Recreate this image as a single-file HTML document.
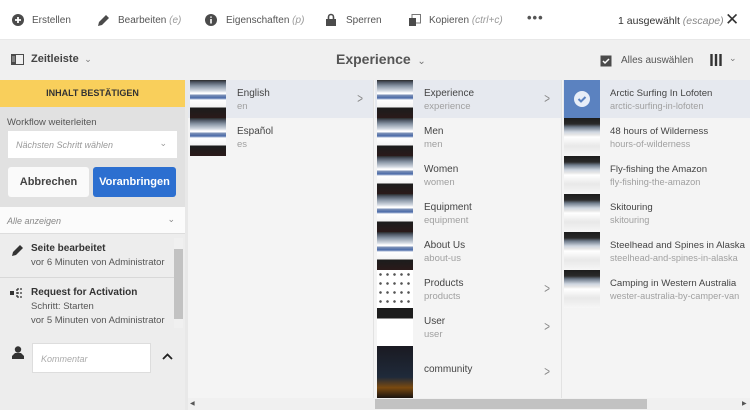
<!DOCTYPE html>
<html><head><meta charset="utf-8"><style>
*{box-sizing:border-box;margin:0;padding:0}
body{width:750px;height:410px;overflow:hidden;background:#f4f4f4;font-family:"Liberation Sans",sans-serif;color:#4b4b4b;position:relative;font-size:11px}
.abs{position:absolute}
.top{left:0;top:0;width:750px;height:40px;background:#fff;border-bottom:1px solid #e8e8e8}
.ti{position:absolute;top:15px;font-size:10px;color:#555;white-space:nowrap}
.ti i{color:#999}
.bar2{left:0;top:40px;width:750px;height:40px;background:#f0f0f0}
.left{left:0;top:80px;width:185px;height:330px;background:#ededed}
.col{top:80px;height:318px;background:#f4f4f4;border-right:1px solid #e2e2e2}
.row{position:absolute;left:0;height:38px;width:100%}
.row.sel{background:#e6e9ef}
.th{position:absolute;top:0;width:36px;height:38px;background:linear-gradient(#2a2a2a 0,#4a5260 2px,#8a96a6 6px,#d5dbe3 11px,#fff 13px,#fff 14px,#7f93b8 15px,#4a6aa8 18px,#fff 20px,#f4f4f4 27px,#1c1c1c 28px,#2a1a1a 38px)}
.th2{background:linear-gradient(#1c1c1c 0,#2a2a2a 6px,#6e7b8a 9px,#cfd6e0 14px,#e8e8e8 17px,#fff 19px,#e8e8e8 28px,#f6f6f6 38px)}
.n{position:absolute;top:8px;font-size:10px;color:#444;white-space:nowrap}
.s{position:absolute;top:21px;font-size:9.5px;color:#a0a0a0;white-space:nowrap}
.c3 .n{font-size:9.6px}.c3 .s{font-size:9.2px}
.ch{position:absolute;top:10px;font-size:14px;color:#888;transform:scaleX(.7)}
</style></head><body>
<div class="abs top">
 <svg class="abs" style="left:12px;top:14px" width="12" height="12"><circle cx="6" cy="6" r="6" fill="#4b4b4b"/><path d="M6 3v6M3 6h6" stroke="#fff" stroke-width="1.8"/></svg>
 <div class="ti" style="left:32px">Erstellen</div>
 <svg class="abs" style="left:97px;top:14px" width="13" height="13"><path d="M1 12l1-4 7-7 3 3-7 7z" fill="#4b4b4b"/></svg>
 <div class="ti" style="left:118px">Bearbeiten <i>(e)</i></div>
 <svg class="abs" style="left:205px;top:14px" width="12" height="12"><circle cx="6" cy="6" r="6" fill="#4b4b4b"/><path d="M6 5v4.5M6 2.5v1.3" stroke="#fff" stroke-width="1.6"/></svg>
 <div class="ti" style="left:226px">Eigenschaften <i>(p)</i></div>
 <svg class="abs" style="left:326px;top:13px" width="10" height="13"><path d="M2.5 6V4a2.5 2.5 0 0 1 5 0v2" stroke="#4b4b4b" stroke-width="1.6" fill="none"/><rect x="0" y="6" width="10" height="7" fill="#4b4b4b"/></svg>
 <div class="ti" style="left:346px">Sperren</div>
 <svg class="abs" style="left:409px;top:14px" width="12" height="12"><rect x="3" y="0.5" width="8.5" height="8.5" fill="none" stroke="#777"/><rect x="0" y="4" width="7" height="8" fill="#4b4b4b"/></svg>
 <div class="ti" style="left:429px">Kopieren <i>(ctrl+c)</i></div>
 <div class="ti" style="left:527px;top:10px;font-weight:bold;font-size:13px;letter-spacing:1px">•••</div>
 <div class="ti" style="left:618px;font-size:10.5px;color:#333">1 ausgewählt <i style="color:#888">(escape)</i></div>
 <div class="ti" style="left:725px;top:10px;font-size:17px;color:#333">✕</div>
</div>
<div class="abs bar2">
 <svg class="abs" style="left:11px;top:14px" width="13" height="11"><rect x="0.5" y="0.5" width="12" height="10" fill="none" stroke="#4b4b4b"/><rect x="0" y="0" width="5" height="11" fill="#4b4b4b"/><path d="M1 3h3M1 5h3M1 7h3" stroke="#ddd" stroke-width="0.8"/></svg>
 <div class="ti" style="left:31px;top:13px;font-size:11px;font-weight:bold;color:#444">Zeitleiste <span style="font-weight:normal;color:#777;font-size:9px">&nbsp;⌄</span></div>
 <div class="ti" style="left:336px;top:11px;font-size:14px;font-weight:bold;color:#555">Experience <span style="font-weight:normal;font-size:10px;color:#777">&nbsp;⌄</span></div>
 <svg class="abs" style="left:600px;top:15px" width="12" height="12"><rect x="0.5" y="0.5" width="11" height="11" fill="#4b4b4b"/><path d="M3 6l2 2 4-4" stroke="#fff" stroke-width="1.5" fill="none"/></svg>
 <div class="ti" style="left:621px;top:15px;font-size:10px;color:#555">Alles auswählen</div>
 <svg class="abs" style="left:710px;top:14px" width="12" height="12"><path d="M1.5 0v12M6 0v12M10.5 0v12" stroke="#333" stroke-width="2.4"/></svg>
 <div class="ti" style="left:729px;top:13px;font-size:9px;color:#777">⌄</div>
</div>
<div class="abs left">
 <div class="abs" style="left:0;top:0;width:185px;height:27px;background:#f9cf5b;text-align:center;font-size:9px;font-weight:bold;line-height:27px;color:#333">INHALT BESTÄTIGEN</div>
 <div class="abs" style="left:0;top:27px;width:185px;height:100px;background:#e1e1e1"></div>
 <div class="abs" style="left:7px;top:37px;font-size:9.5px;color:#555">Workflow weiterleiten</div>
 <div class="abs" style="left:8px;top:51px;width:169px;height:27px;background:#fff;font-size:9px;color:#999;font-style:italic;padding:9px 0 0 8px">Nächsten Schritt wählen<span style="position:absolute;right:10px;top:7px;font-style:normal">⌄</span></div>
 <div class="abs" style="left:8px;top:87px;width:81px;height:30px;background:#fafafa;border-radius:3px;font-size:11px;font-weight:bold;color:#444;text-align:center;line-height:30px">Abbrechen</div>
 <div class="abs" style="left:93px;top:87px;width:83px;height:30px;background:#2c6fd0;border-radius:3px;font-size:11px;font-weight:bold;color:#fff;text-align:center;line-height:30px">Voranbringen</div>
 <div class="abs" style="left:0;top:127px;width:185px;height:27px;background:#fbfbfb;border-bottom:1px solid #ddd;font-size:9px;color:#888;font-style:italic;padding:9px 0 0 7px">Alle anzeigen<span style="position:absolute;right:10px;top:7px;font-style:normal">⌄</span></div>
 <div class="abs" style="left:174px;top:158px;width:9px;height:90px;background:#f0f0f0"></div>
 <div class="abs" style="left:174px;top:169px;width:9px;height:70px;background:#c2c2c2"></div>
 <svg class="abs" style="left:11px;top:164px" width="13" height="13"><path d="M1 12l1-4 7-7 3 3-7 7z" fill="#333"/></svg>
 <div class="abs" style="left:31px;top:163px;font-size:10px;font-weight:bold;color:#333">Seite bearbeitet</div>
 <div class="abs" style="left:31px;top:177px;font-size:9.5px;color:#555">vor 6 Minuten von Administrator</div>
 <div class="abs" style="left:0;top:197px;width:174px;height:1px;background:#d8d8d8"></div>
 <svg class="abs" style="left:10px;top:208px" width="13" height="11"><rect x="0" y="3" width="4" height="4" fill="#333"/><path d="M7 1h5M7 5h5M7 9h5M7 1v8" stroke="#333" stroke-width="1.3" stroke-dasharray="2 1"/></svg>
 <div class="abs" style="left:31px;top:207px;font-size:10px;font-weight:bold;color:#333">Request for Activation</div>
 <div class="abs" style="left:31px;top:221px;font-size:9.5px;color:#555">Schritt: Starten</div>
 <div class="abs" style="left:31px;top:235px;font-size:9.5px;color:#555">vor 5 Minuten von Administrator</div>
 <svg class="abs" style="left:12px;top:266px" width="12" height="13"><circle cx="6" cy="3.5" r="3.2" fill="#333"/><path d="M0 13v-3l3-3h6l3 3v3z" fill="#333"/></svg>
 <div class="abs" style="left:32px;top:263px;width:119px;height:30px;background:#fff;border:1px solid #ddd;font-size:9px;color:#aaa;font-style:italic;padding:10px 0 0 8px">Kommentar</div>
 <svg class="abs" style="left:162px;top:273px" width="11" height="7"><path d="M1 6l4.5-4.5L10 6" stroke="#222" stroke-width="1.8" fill="none"/></svg>
</div>
<div class="abs" style="left:185px;top:80px;width:3px;height:330px;background:#e8e8e8"></div>
<div class="abs col" style="left:188px;width:186px">
 <div class="row sel" style="top:0"><div class="th" style="left:2px"></div><div class="n" style="left:49px">English</div><div class="s" style="left:49px">en</div><div class="ch" style="left:168px">&gt;</div></div>
 <div class="row" style="top:38px"><div class="th" style="left:2px"></div><div class="n" style="left:49px">Español</div><div class="s" style="left:49px">es</div></div>
</div>
<div class="abs col" style="left:375px;width:187px">
 <div class="row sel" style="top:0"><div class="th" style="left:2px"></div><div class="n" style="left:49px">Experience</div><div class="s" style="left:49px">experience</div><div class="ch" style="left:168px">&gt;</div></div>
 <div class="row" style="top:38px"><div class="th" style="left:2px"></div><div class="n" style="left:49px">Men</div><div class="s" style="left:49px">men</div></div>
 <div class="row" style="top:76px"><div class="th" style="left:2px"></div><div class="n" style="left:49px">Women</div><div class="s" style="left:49px">women</div></div>
 <div class="row" style="top:114px"><div class="th" style="left:2px"></div><div class="n" style="left:49px">Equipment</div><div class="s" style="left:49px">equipment</div></div>
 <div class="row" style="top:152px"><div class="th" style="left:2px"></div><div class="n" style="left:49px">About Us</div><div class="s" style="left:49px">about-us</div></div>
 <div class="row" style="top:190px"><div class="th" style="left:2px;background:#fff;background-image:radial-gradient(circle,#555 1.1px,transparent 1.5px);background-size:7px 9px"></div><div class="n" style="left:49px">Products</div><div class="s" style="left:49px">products</div><div class="ch" style="left:168px">&gt;</div></div>
 <div class="row" style="top:228px"><div class="th" style="left:2px;background:linear-gradient(#1c1c1c 0,#1c1c1c 10px,#fff 11px)"></div><div class="n" style="left:49px">User</div><div class="s" style="left:49px">user</div><div class="ch" style="left:168px">&gt;</div></div>
 <div class="row" style="top:266px;height:52px"><div class="th" style="left:2px;height:52px;background:linear-gradient(#1a1a22,#1f2a3a 60%,#7a4a10 80%,#1a1410)"></div><div class="n" style="left:49px;top:18px">community</div><div class="ch" style="left:168px;top:17px">&gt;</div></div>
</div>
<div class="abs col c3" style="left:563px;width:187px;border-right:none">
 <div class="row sel" style="top:0"><div class="th" style="left:1px;background:#5b82c0"></div><svg class="abs" style="left:11px;top:11px" width="16" height="16"><circle cx="8" cy="8" r="8" fill="#e8eef8"/><path d="M4.5 8l2.5 2.5 4.5-4.5" stroke="#5b82c0" stroke-width="2" fill="none"/></svg><div class="n" style="left:47px">Arctic Surfing In Lofoten</div><div class="s" style="left:47px">arctic-surfing-in-lofoten</div></div>
 <div class="row" style="top:38px"><div class="th th2" style="left:1px"></div><div class="n" style="left:47px">48 hours of Wilderness</div><div class="s" style="left:47px">hours-of-wilderness</div></div>
 <div class="row" style="top:76px"><div class="th th2" style="left:1px"></div><div class="n" style="left:47px">Fly-fishing the Amazon</div><div class="s" style="left:47px">fly-fishing-the-amazon</div></div>
 <div class="row" style="top:114px"><div class="th th2" style="left:1px"></div><div class="n" style="left:47px">Skitouring</div><div class="s" style="left:47px">skitouring</div></div>
 <div class="row" style="top:152px"><div class="th th2" style="left:1px"></div><div class="n" style="left:47px">Steelhead and Spines in Alaska</div><div class="s" style="left:47px">steelhead-and-spines-in-alaska</div></div>
 <div class="row" style="top:190px"><div class="th th2" style="left:1px"></div><div class="n" style="left:47px">Camping in Western Australia</div><div class="s" style="left:47px">wester-australia-by-camper-van</div></div>
</div>
<div class="abs" style="left:188px;top:398px;width:562px;height:12px;background:#f0f0f0"></div>
<div class="abs" style="left:375px;top:399px;width:272px;height:10px;background:#c2c2c2"></div>
<div class="abs" style="left:190px;top:400px;font-size:6px;color:#555">◀</div>
<div class="abs" style="left:742px;top:400px;font-size:6px;color:#555">▶</div>
</body></html>
